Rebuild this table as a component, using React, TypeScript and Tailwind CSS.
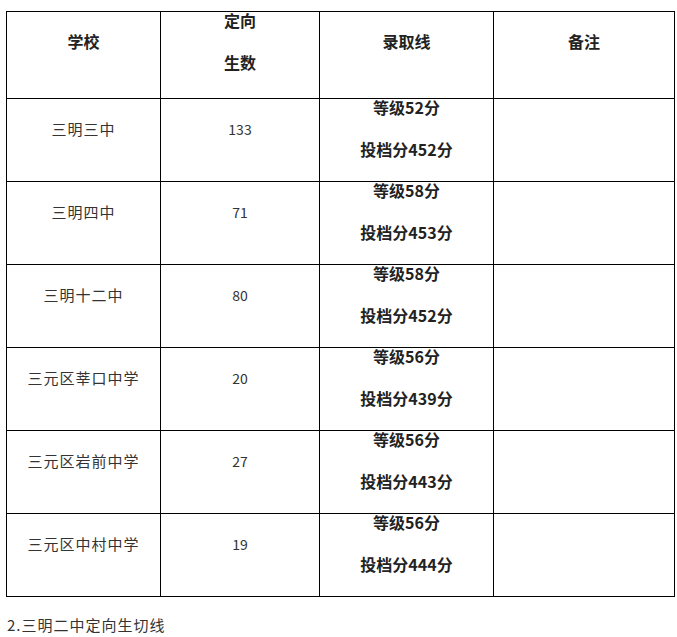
const rows = [
  { school: "三明三中", count: "133", grade: "52", score: "452" },
  { school: "三明四中", count: "71", grade: "58", score: "453" },
  { school: "三明十二中", count: "80", grade: "58", score: "452" },
  { school: "三元区莘口中学", count: "20", grade: "56", score: "439" },
  { school: "三元区岩前中学", count: "27", grade: "56", score: "443" },
  { school: "三元区中村中学", count: "19", grade: "56", score: "444" },
];

const font = "font-['Noto_Sans_CJK_SC',sans-serif]";

export default function App() {
  return (
    <div className={`bg-white w-[677px] h-[637px] overflow-hidden ${font}`}>
      <table className="ml-[6px] mt-[11px] w-[668px] table-fixed border-collapse border border-black">
        <colgroup>
          <col className="w-[154px]" />
          <col className="w-[159px]" />
          <col className="w-[174px]" />
          <col className="w-[181px]" />
        </colgroup>
        <thead>
          <tr className="h-[87px]">
            <th className="border border-black align-top p-0 pt-[19px] text-[16px] leading-[21px] font-bold text-[#222]">
              学校
            </th>
            <th className="border border-black align-top p-0 text-[16px] leading-[21px] font-bold text-[#222]">
              <p className="mt-[-2px]">定向</p>
              <p className="mt-[21px]">生数</p>
            </th>
            <th className="border border-black align-top p-0 pt-[19px] text-[16px] leading-[21px] font-bold text-[#222]">
              录取线
            </th>
            <th className="border border-black align-top p-0 pt-[19px] text-[16px] leading-[21px] font-bold text-[#222]">
              备注
            </th>
          </tr>
        </thead>
        <tbody>
          {rows.map((r) => (
            <tr key={r.school} className="h-[83px]">
              <td className="border border-black align-top p-0 pt-[19px] text-center text-[15px] leading-[21px] tracking-[1px] text-[#333]">
                {r.school}
              </td>
              <td className="border border-black align-top p-0 pt-[20px] text-center text-[14px] leading-[21px] text-[#333]">
                {r.count}
              </td>
              <td className="border border-black align-top p-0 text-center text-[16px] leading-[21px] font-bold text-[#222]">
                <p className="mt-[-2px]">等级{r.grade}分</p>
                <p className="mt-[21px]">投档分{r.score}分</p>
              </td>
              <td className="border border-black p-0"></td>
            </tr>
          ))}
        </tbody>
      </table>
      <p className="ml-[7px] mt-[17px] text-[15px] leading-[21px] tracking-[1px] text-[#333]">
        2.三明二中定向生切线
      </p>
    </div>
  );
}
